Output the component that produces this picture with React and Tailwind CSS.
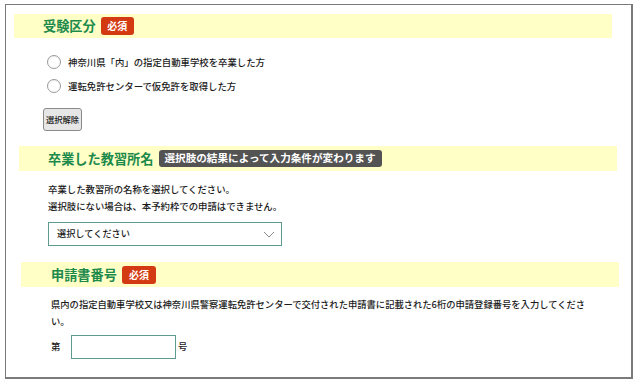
export default function App() {
  const jp = { fontFamily: '"Noto Sans CJK JP", "Noto Sans", sans-serif' };
  return (
    <div className="w-[635px] h-[382px] bg-white overflow-hidden" style={jp}>
      <div className="ml-[5px] mt-[4px] w-[628px] h-[375px] border-l border-t border-r-2 border-b-2 border-[#7a7a7a] flex flex-col">
        {/* Section 1 */}
        <div className="mt-[9px] ml-[8px] w-[598px] h-[24px] bg-[#ffffc6] flex items-center pl-[29px] gap-[4px]">
          <span className="text-[13.2px] font-bold text-[#1d8a4c] leading-none">受験区分</span>
          <span className="bg-[#d43a12] text-white text-[10px] font-bold leading-none rounded-[3px] px-[6.5px] py-[4px] ml-[1px]">必須</span>
        </div>
        <div className="mt-[12px] ml-[41px] flex flex-col">
          <div className="h-[24px] flex items-center gap-[7px]">
            <div className="w-[14px] h-[14px] rounded-full border border-[#9a9a9a] bg-white shadow-[inset_0_1px_1px_rgba(0,0,0,0.08)]" />
            <span className="text-[9.4px] font-medium text-[#1a1a1a]">神奈川県「内」の指定自動車学校を卒業した方</span>
          </div>
          <div className="h-[24px] flex items-center gap-[7px]">
            <div className="w-[14px] h-[14px] rounded-full border border-[#9a9a9a] bg-white shadow-[inset_0_1px_1px_rgba(0,0,0,0.08)]" />
            <span className="text-[9.4px] font-medium text-[#1a1a1a]">運転免許センターで仮免許を取得した方</span>
          </div>
        </div>
        <div className="mt-[10px] ml-[37px] w-[39px] h-[23px] bg-[#e6e6e6] border border-[#8a8a8a] rounded-[3px] flex items-center justify-center">
          <span className="text-[8.3px] font-medium text-[#1a1a1a] leading-none">選択解除</span>
        </div>

        {/* Section 2 */}
        <div className="mt-[15px] ml-[13px] w-[598px] h-[25px] bg-[#ffffc6] flex items-center pl-[29px] gap-[4px]">
          <span className="text-[13.2px] font-bold text-[#1d8a4c] leading-none">卒業した教習所名</span>
          <span className="bg-[#535353] text-white text-[10.6px] font-bold leading-none rounded-[3px] px-[6px] py-[3.5px] ml-[1px]">選択肢の結果によって入力条件が変わります</span>
        </div>
        <div className="mt-[10px] ml-[42px] text-[9.4px] font-medium leading-[17px] text-[#1a1a1a]">
          <div>卒業した教習所の名称を選択してください。</div>
          <div>選択肢にない場合は、本予約枠での申請はできません。</div>
        </div>
        <div className="mt-[7px] ml-[42px] w-[234px] h-[24px] border border-[#5f9a8e] bg-white flex items-center justify-between pl-[8px] pr-[6px]">
          <span className="text-[9.2px] font-medium text-[#1a1a1a]">選択してください</span>
          <svg width="12" height="7" viewBox="0 0 12 7" fill="none">
            <path d="M1 1 L6 6 L11 1" stroke="#8a8a8a" strokeWidth="1" />
          </svg>
        </div>

        {/* Section 3 */}
        <div className="mt-[16px] ml-[15px] w-[598px] h-[25px] bg-[#ffffc6] flex items-center pl-[30px] gap-[4px]">
          <span className="text-[13.2px] font-bold text-[#1d8a4c] leading-none">申請書番号</span>
          <span className="bg-[#d43a12] text-white text-[10px] font-bold leading-none rounded-[3px] px-[7px] py-[4px] ml-[1px]">必須</span>
        </div>
        <div className="mt-[9px] ml-[45px] text-[9.3px] font-medium leading-[17px] text-[#1a1a1a]">
          <div>県内の指定自動車学校又は神奈川県警察運転免許センターで交付された申請書に記載された6桁の申請登録番号を入力してくださ</div>
          <div>い。</div>
        </div>
        <div className="mt-[5px] ml-[45px] flex items-center">
          <span className="text-[9.3px] font-medium text-[#1a1a1a] w-[20px]">第</span>
          <div className="w-[105px] h-[24px] border border-[#5f9a8e] bg-white" />
          <span className="text-[9.3px] font-medium text-[#1a1a1a] ml-[2px]">号</span>
        </div>
      </div>
    </div>
  );
}
